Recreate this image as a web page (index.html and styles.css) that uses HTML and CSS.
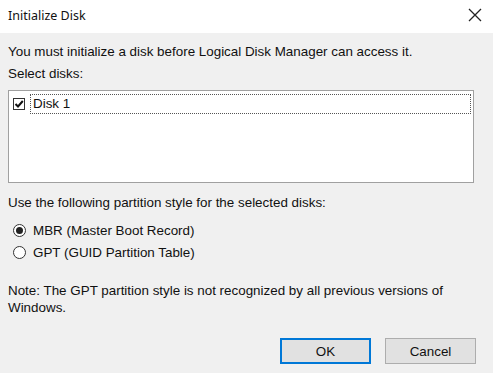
FILE: index.html
```html
<!DOCTYPE html>
<html>
<head>
<meta charset="utf-8">
<link rel="stylesheet" href="styles.css">
</head>
<body>
<div class="dialog">
  <div class="titlebar">
    <span class="title">Initialize Disk</span>
    <svg class="close" width="14" height="14" viewBox="0 0 14 14"><path d="M1 1 L13 13 M13 1 L1 13" stroke="#222" stroke-width="1.3" fill="none"/></svg>
  </div>
  <div class="content">
    <p class="line">You must initialize a disk before Logical Disk Manager can access it.</p>
    <p class="line label">Select disks:</p>
    <div class="listbox">
      <div class="item">
        <span class="checkbox"><svg width="10" height="10" viewBox="0 0 10 10"><path d="M1.5 5 L4 7.5 L8.8 2" stroke="#111" stroke-width="2" fill="none"/></svg></span>
        <span class="itemtext">Disk 1</span>
      </div>
    </div>
    <p class="line section">Use the following partition style for the selected disks:</p>
    <div class="radios">
      <label class="radio"><span class="circle checked"></span>MBR (Master Boot Record)</label>
      <label class="radio"><span class="circle"></span>GPT (GUID Partition Table)</label>
    </div>
    <p class="note">Note: The GPT partition style is not recognized by all previous versions of Windows.</p>
    <div class="buttons">
      <button class="btn default">OK</button>
      <button class="btn">Cancel</button>
    </div>
  </div>
</div>
</body>
</html>
```
FILE: styles.css
```css
* { box-sizing: border-box; }
html, body { margin: 0; padding: 0; }
body {
  width: 493px;
  height: 373px;
  background: #f0f0f0;
  font-family: "Liberation Sans", Arial, sans-serif;
  font-size: 13.4px;
  color: #111;
  overflow: hidden;
}
.dialog { width: 493px; height: 373px; display: flex; flex-direction: column; }
.titlebar {
  height: 33px;
  background: #fff;
  display: flex;
  align-items: center;
  justify-content: space-between;
  padding: 0 11px 3px 8px;
}
.title { font-family: "Noto Sans", "Open Sans", sans-serif; font-size: 12.5px; color: #111; }
.close { display: block; }
.content { padding: 10px 17px 0 8px; }
.line { margin: 0; height: 22px; line-height: 18px; }
.label { height: 25px; }
.listbox {
  width: 466px;
  height: 93px;
  background: #fff;
  border: 1px solid #a0a0a0;
  padding: 3px 2px 0 4px;
}
.item { display: flex; align-items: center; height: 20px; }
.checkbox {
  width: 12px; height: 12px;
  border: 1px solid #333;
  background: #fff;
  display: flex; align-items: center; justify-content: center;
  margin-right: 5px;
}
.checkbox svg { display: block; }
.itemtext {
  flex: 1;
  height: 20px;
  line-height: 18px;
  border: 1px dotted #555;
  padding-left: 2px;
}
.section { margin-top: 11px; height: 25px; }
.radios { display: flex; flex-direction: column; padding-left: 5px; }
.radio { display: flex; align-items: center; height: 22px; }
.circle {
  width: 13px; height: 13px;
  border: 1px solid #333;
  border-radius: 50%;
  background: #fff;
  margin-right: 7px;
  position: relative;
}
.circle.checked::after {
  content: "";
  position: absolute;
  left: 2px; top: 2px;
  width: 7px; height: 7px;
  border-radius: 50%;
  background: #222;
}
.note { margin: 19px 0 0 0; line-height: 17px; width: 460px; }
.buttons { display: flex; justify-content: flex-end; gap: 14px; margin-top: 22px; }
.btn {
  width: 91px; height: 26px;
  background: #e1e1e1;
  border: 1px solid #adadad;
  font-family: "Liberation Sans", Arial, sans-serif;
  font-size: 13.4px;
  color: #111;
  padding: 0;
}
.btn.default { border: 2px solid #0078d7; }
```
